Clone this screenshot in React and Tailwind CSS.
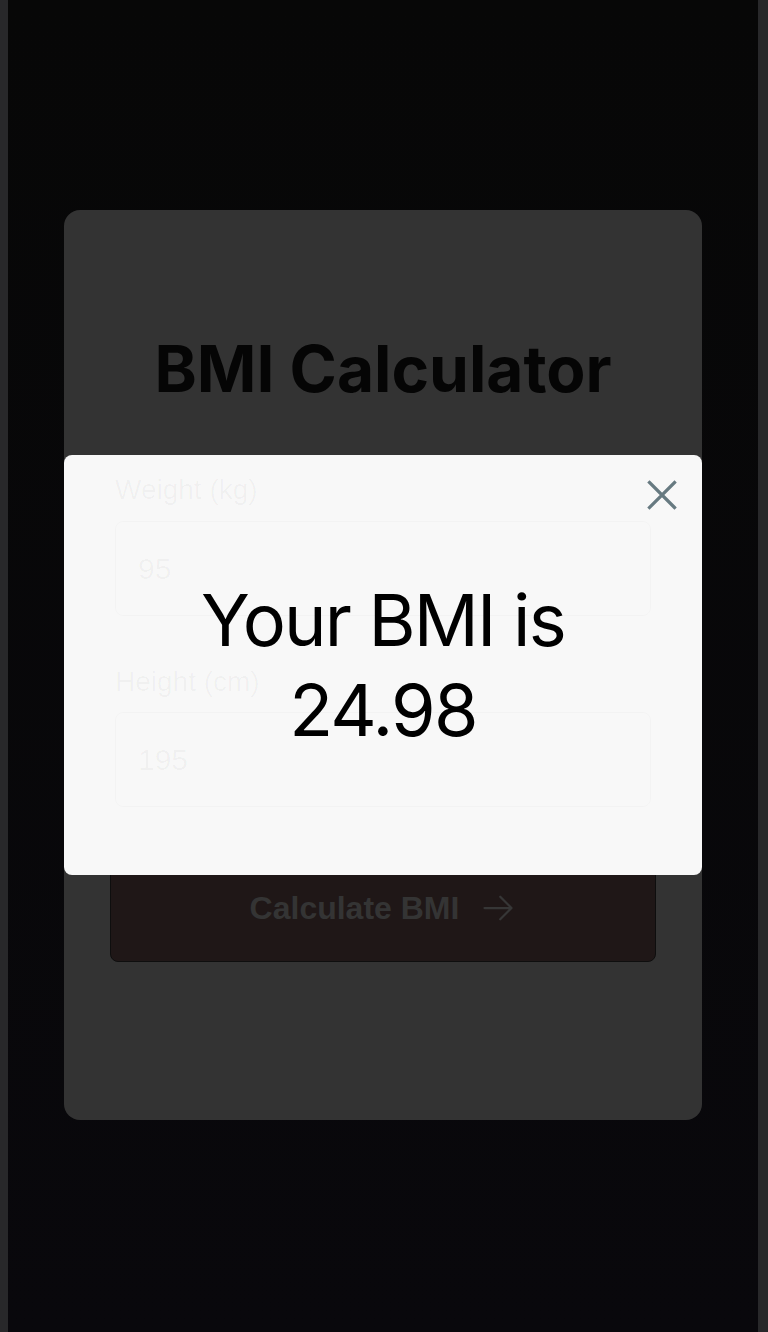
import React from "react";

function CloseIcon() {
  return (
    <svg width="30" height="30" viewBox="0 0 30 30" fill="none" stroke="#677a81" strokeWidth="3.2" strokeLinecap="square">
      <path d="M2.5 2.5 L27.5 27.5 M27.5 2.5 L2.5 27.5" />
    </svg>
  );
}

function ArrowIcon() {
  return (
    <svg width="36" height="36" viewBox="0 0 24 24" fill="none" stroke="#363636" strokeWidth="1.5" strokeLinecap="round" strokeLinejoin="round">
      <path d="M13.5 4.5 21 12m0 0-7.5 7.5M21 12H3" />
    </svg>
  );
}

export default function App() {
  const sans = { fontFamily: '"Liberation Sans", Arial, sans-serif' };
  const inter = { fontFamily: 'Inter, "Noto Sans", sans-serif' };
  return (
    <div className="w-full h-[1332px] bg-[#28282a] pl-2 pr-[10px] overflow-hidden">
      <div className="relative h-full bg-linear-to-b from-[#070707] to-[#09080c] flex items-center justify-center">
        {/* card */}
        <div className="mb-[2px] w-[638px] h-[910px] rounded-2xl bg-[#333333] px-[46px] pt-[127px] flex flex-col">
          <h1 className="text-center text-[64px] leading-[64px] font-bold text-[#050505]" style={inter}>
            BMI Calculator
          </h1>
          <div className="relative z-20 flex flex-col px-[5px]" style={sans}>
            <label className="mt-[73px] text-[28px] leading-[32px] text-black/[0.035]">Weight (kg)</label>
            <div className="mt-[15px] h-[95px] rounded-lg border border-black/[0.018] flex items-center pl-[22px] text-[30px] text-black/[0.035]">
              95
            </div>
            <label className="mt-[50px] text-[28px] leading-[32px] text-black/[0.035]">Height (cm)</label>
            <div className="mt-[14px] h-[95px] rounded-lg border border-black/[0.018] flex items-center pl-[22px] text-[30px] text-black/[0.035]">
              195
            </div>
          </div>
          <button
            className="mt-[50px] w-full h-[105px] shrink-0 rounded-lg bg-[#1f1717] border border-[#0e0e0e] flex items-center justify-center gap-[21px] pb-[3px] text-[32px] font-bold text-[#343434]"
            style={sans}
          >
            <span>Calculate BMI</span>
            <ArrowIcon />
          </button>
        </div>

        {/* modal */}
        <div className="absolute inset-0 z-10 flex items-center justify-center">
          <div className="mb-[2px] relative w-[638px] h-[420px] rounded-lg bg-[#f8f8f8] flex items-center justify-center">
            <button className="absolute right-[25px] top-[25px] w-[30px] h-[30px] flex items-center justify-center">
              <CloseIcon />
            </button>
            <p className="text-center text-[72px] leading-[90px] tracking-tight text-black font-normal" style={inter}>
              Your BMI is
              <br />
              24.98
            </p>
          </div>
        </div>
      </div>
    </div>
  );
}
